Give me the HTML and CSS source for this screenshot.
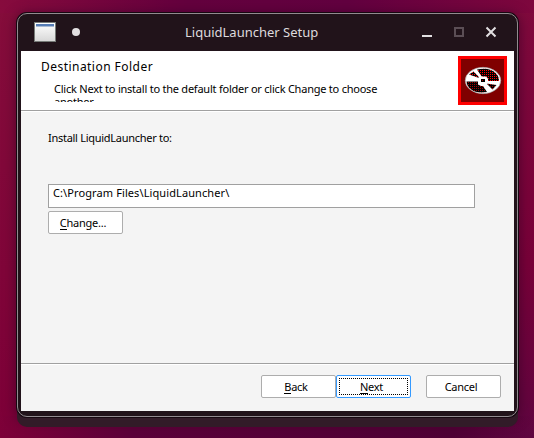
FILE: index.html
```html
<!DOCTYPE html>
<html lang="en">
<head>
<meta charset="utf-8">
<title>LiquidLauncher Setup</title>
<link rel="stylesheet" href="styles.css">
</head>
<body>
<main class="window">
  <header class="titlebar">
    <svg class="app-icon" width="22" height="20" viewBox="0 0 22 20"><defs><linearGradient id="paper" x2="0" y2="1"><stop stop-color="#fff"/><stop offset="1" stop-color="#d8d8d8"/></linearGradient></defs><path fill="#777b78" d="M0 0h22v20H0z"/><path fill="url(#paper)" d="M1 1h20v18H1z"/><path fill="#557bb5" d="M2 2h18v2H2z"/><path fill="#a9bad2" d="M2 4h18v1H2z"/></svg>
    <span class="pin"></span>
    <h1 class="title">LiquidLauncher Setup</h1>
    <svg class="controls" width="78" height="14" viewBox="0 0 78 14"><path fill="#e2dfe1" d="M1 10h10v2H1z"/><path fill="none" stroke="#5b4e55" stroke-width="2" d="M34 3h8v8h-8z"/><path fill="none" stroke="#e2dfe1" stroke-width="2" d="M65.500 2.500l9 9m0-9l-9 9"/></svg>
  </header>
  <section class="client">
    <header class="banner">
      <div class="banner-text">
        <h2 class="heading">Destination Folder</h2>
        <p class="description">Click Next to install to the default folder or click Change to choose another.</p>
      </div>
      <svg class="disc" width="49" height="49" viewBox="0 0 49 49"><defs>
        <pattern id="dots" width="2" height="2" patternUnits="userSpaceOnUse" shape-rendering="crispEdges"><path d="M0 0h2v2H0z"/><path fill="#f00" d="M0 0h1v1H0z"/></pattern>
        <pattern id="dim" width="2" height="2" patternUnits="userSpaceOnUse" shape-rendering="crispEdges"><path d="M0 0h2v2H0z"/><path fill="#a00000" d="M0 0h1v1H0z"/></pattern></defs>
        <path fill="red" d="M0 0h49v49H0z"/><path fill="#800000" d="M3 3h43v43H3z"/>
        <ellipse cx="25" cy="24.500" rx="17.800" ry="13.200" fill="#fff" stroke="#999" stroke-width=".6"/>
        <path fill="url(#dots)" d="M19 13.500c8-2 16 0 19 4 2 2 3 4 3 7.500H29l-2-4h-3z"/>
        <path fill="url(#dots)" d="M11 18.500l4.500-3 6 6h-2z"/>
        <path fill="url(#dim)" d="M8.500 25.500H20v3l3 1.500h2l4 6c-12 2-20-3-20.500-10.500z"/>
        <path fill="url(#dim)" d="M28.500 27.500l10 1.500-4 4.500z"/>
        <path fill="#fff" d="M22 20.500h6l2 2v4.500l-2 1.500h-5l-2.500-2v-4z"/><path d="M23 23h4v3h-4z"/><path fill="#a00000" d="M24 24h1v1h-1z"/>
      </svg>
    </header>
    <div class="content">
      <label class="label" for="folder">Install LiquidLauncher to:</label>
      <div class="field" id="folder">C:\Program Files\LiquidLauncher\</div>
      <button class="btn change"><span><u>C</u>hange...</span></button>
    </div>
    <footer class="footer">
      <button class="btn"><span><u>B</u>ack</span></button>
      <button class="btn primary"><span><u>N</u>ext</span></button>
      <button class="btn cancel"><span>Cancel</span></button>
    </footer>
  </section>
</main>
</body>
</html>
```
FILE: styles.css
```css
* { box-sizing: border-box; }
body {
  margin: 0;
  height: 438px;
  overflow: hidden;
  padding: 13px 16px 0 17px;
  font: 11px/14px "Noto Sans", sans-serif;
  color: #000;
  background:
    linear-gradient(90deg, transparent 0, #5a0039 25%, #4e0034 85%, transparent 100%) 0 100% / 100% 22px no-repeat,
    linear-gradient(90deg, #870b3d 0, #64003e 35%, #620040 65%, #7e073d 100%) 0 0 / 100% 13px no-repeat,
    linear-gradient(#800a3d, #780139 60%, #5f0540) 100% 0 / 50% 100% no-repeat,
    linear-gradient(#850d3b, #7d0038);
}
.window {
  width: 501px;
  height: 404px;
  padding: 0 3px;
  border: 1px solid #918b8f;
  border-radius: 10px;
  background: #21131a;
  box-shadow: 0 0 0 1px #160710, 0 10px 0 0 #321b28, 0 2px 12px 2px #35002399;
}
.titlebar { display: flex; align-items: center; height: 37px; padding-left: 13px; }
.app-icon { margin-bottom: 1px; }
.pin { width: 8px; height: 8px; margin: 0 0 1px 16px; border-radius: 50%; background: #e2dfe1; }
.title { flex: 1; margin: 0 0 2px 105px; font-size: 13px; font-weight: 400; line-height: 18px; color: #dedadd; white-space: nowrap; }
.controls { margin: 0 15px 1px 0; }
.client { display: flex; flex-direction: column; width: 493px; height: 360px; background: #f4f4f4; }
.banner { display: flex; justify-content: space-between; height: 60px; padding: 5px 7px 0 20px; background: #fff; border-bottom: 1px solid #a0a0a0; box-shadow: 0 1px #fff; }
.heading { margin: 3px 0 0; font-size: 12px; line-height: 16px; font-weight: 400; letter-spacing: .46px; }
.description { width: 340px; height: 20px; margin: 7px 0 0 13px; overflow: hidden; line-height: 13px; letter-spacing: -.23px; }
.content { flex: 1; padding: 20px 39px 0 27px; }
.label { display: block; height: 53px; letter-spacing: -.28px; }
.field { height: 24px; padding: 1px 4px; border: 1px solid #a0a0a0; background: #fff; letter-spacing: .1px; }
.btn { width: 75px; height: 23px; padding: 0; border: 1px solid #adadad; border-radius: 2px; background: #fff; color: inherit; font: inherit; letter-spacing: -.25px; }
.btn u { text-decoration: none; border-bottom: 1px solid #000; display: inline-block; line-height: 12px; }
.change { display: block; margin-top: 3px; padding-right: 5px; }
.footer { display: flex; justify-content: flex-end; height: 48px; padding: 11px 13px 0 0; border-top: 1px solid #a0a0a0; box-shadow: inset 0 1px #fff; }
.footer .btn:first-child { padding-right: 5px; }
.footer .primary { border-color: #3399ff; padding: 2px; }
.primary span { display: block; height: 17px; padding-right: 4px; line-height: 15px; border: 1px dotted #000; }
.cancel { margin-left: 15px; padding-right: 5px; }
```
